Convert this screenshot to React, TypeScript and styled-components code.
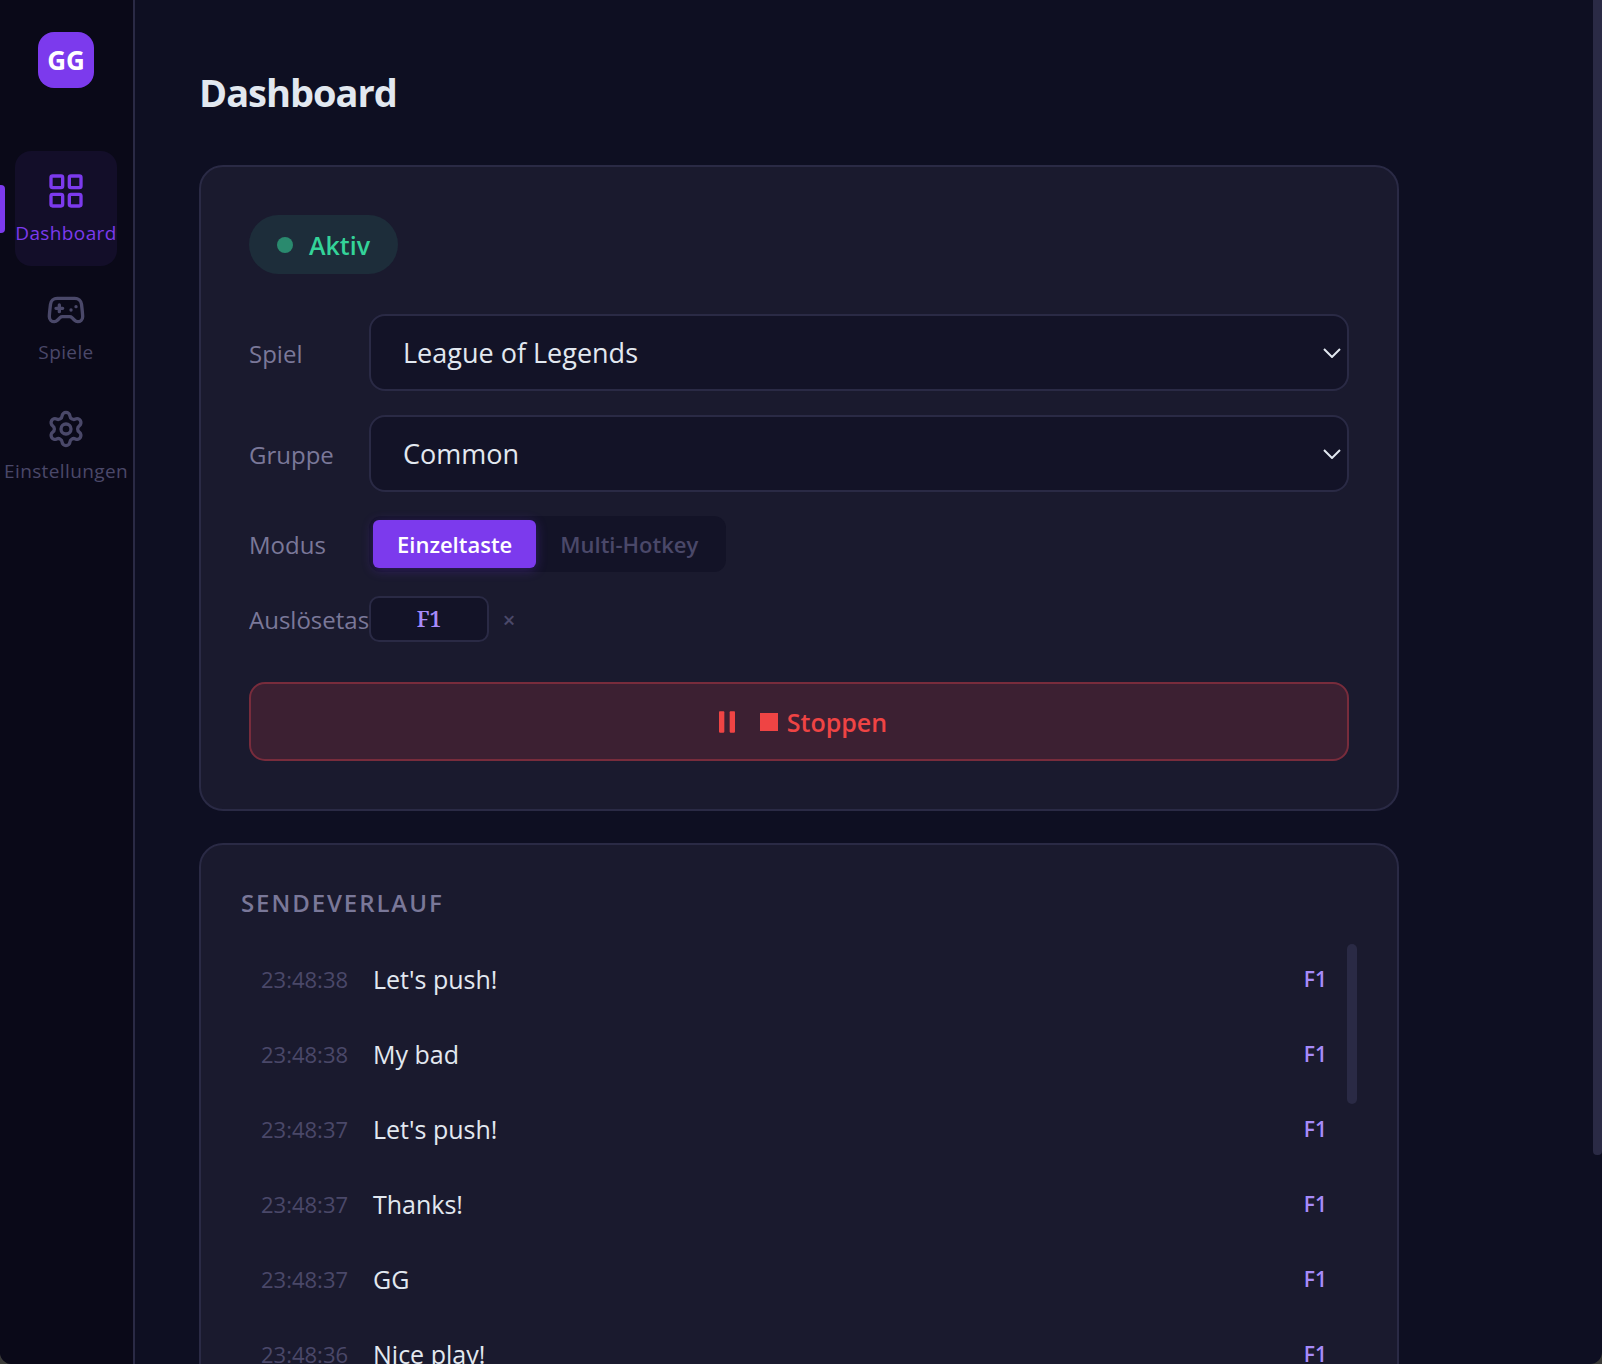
import React, { useState } from "react";
import styled, { createGlobalStyle, css } from "styled-components";

const color = {
  frame: "#3a3a38",
  bg: "#0e0f22",
  sidebar: "#0a0918",
  card: "#1a1a2e",
  field: "#131327",
  border: "#2a2a45",
  text: "#e2e8f0",
  label: "#7a7899",
  muted: "#4a4869",
  accent: "#7c3aed",
  accentSoft: "#a78bfa",
  ok: "#34d399",
  danger: "#ef4444",
};

const GlobalStyle = createGlobalStyle`
  * { box-sizing: border-box; }
  html, body { margin: 0; background: ${color.frame}; }
  body, button, input, select {
    font-family: "Segoe UI", "Open Sans", "Noto Sans", sans-serif;
  }
  h1, h2, ul { margin: 0; padding: 0; }
`;

const Shell = styled.div`
  display: flex;
  height: 100vh;
  overflow: hidden;
  background: ${color.bg};
  color: ${color.text};
  border-radius: 0 0 12px 12px;
`;

const Sidebar = styled.aside`
  flex: none;
  width: 135px;
  display: flex;
  flex-direction: column;
  align-items: center;
  padding: 32px 16px 0 15px;
  background: ${color.sidebar};
  border-right: 2px solid ${color.border};
`;

const Logo = styled.div`
  width: 56px;
  height: 56px;
  display: grid;
  place-items: center;
  margin-bottom: 63px;
  border-radius: 16px;
  background: ${color.accent};
  color: #fff;
  font-size: 26px;
  font-weight: 700;
`;

const Nav = styled.nav`
  width: 100%;
  display: flex;
  flex-direction: column;
  gap: 4px;
`;

const NavButton = styled.button<{ $active: boolean }>`
  height: 115px;
  display: flex;
  flex-direction: column;
  align-items: center;
  gap: 10px;
  padding: 20px 0 0;
  border: 0;
  border-radius: 16px;
  background: transparent;
  color: ${color.muted};
  font-size: 19px;
  line-height: 24px;
  font-weight: 500;
  letter-spacing: 0.02em;
  white-space: nowrap;
  cursor: pointer;
  ${(p) =>
    p.$active &&
    css`
      background: #130e29;
      color: ${color.accent};
      &::before {
        content: "";
        position: absolute;
        left: 0;
        width: 5px;
        height: 48px;
        margin-top: 14px;
        border-radius: 0 4px 4px 0;
        background: ${color.accent};
      }
    `}
`;

const NavIcon = styled.svg`
  flex: none;
  width: 40px;
  height: 40px;
  fill: none;
  stroke: currentColor;
  stroke-width: 2;
  stroke-linecap: round;
  stroke-linejoin: round;
`;

const Main = styled.main`
  flex: 1;
  min-width: 0;
  overflow-y: auto;
  scrollbar-width: none;
  padding: 64px;
`;

const Content = styled.div`
  max-width: 1200px;
  display: flex;
  flex-direction: column;
  gap: 32px;
`;

const Title = styled.h1`
  margin-bottom: 12px;
  font-size: 38px;
  line-height: 57px;
  font-weight: 700;
  letter-spacing: -1px;
`;

const Card = styled.section<{ $pad: number }>`
  padding: ${(p) => p.$pad}px;
  border: 2px solid ${color.border};
  border-radius: 24px;
  background: ${color.card};
`;

const Status = styled.div`
  width: fit-content;
  height: 59px;
  display: flex;
  align-items: center;
  gap: 16px;
  padding: 0 28px;
  margin-bottom: 40px;
  border-radius: 30px;
  background: #1d2d3a;
  color: ${color.ok};
  font-size: 25px;
  font-weight: 600;
`;

const Dot = styled.span`
  width: 16px;
  height: 16px;
  border-radius: 50%;
  background: #2a8a6e;
`;

const Form = styled.div`
  display: flex;
  flex-direction: column;
  gap: 24px;
`;

const Row = styled.div`
  display: flex;
  align-items: center;
`;

const Label = styled.label`
  flex: none;
  width: 120px;
  padding-top: 2px;
  overflow: hidden;
  white-space: nowrap;
  color: ${color.label};
  font-size: 24px;
  line-height: 34px;
`;

const SelectBox = styled.div`
  flex: 1;
  display: grid;
  align-items: center;
  > * {
    grid-area: 1 / 1;
  }
`;

const Select = styled.select`
  width: 100%;
  height: 77px;
  padding: 0 64px 0 32px;
  appearance: none;
  border: 2px solid ${color.border};
  border-radius: 16px;
  background: ${color.field};
  color: ${color.text};
  font-size: 27px;
`;

const Chevron = styled.svg`
  justify-self: end;
  width: 18px;
  height: 10px;
  margin-right: 8px;
  fill: none;
  stroke: ${color.text};
  stroke-width: 2;
  pointer-events: none;
`;

const Segments = styled.div`
  display: flex;
  padding: 4px;
  border-radius: 12px;
  background: ${color.field};
`;

const Segment = styled.button<{ $active: boolean }>`
  height: 48px;
  padding: 0 24px;
  border: 0;
  border-radius: 6px;
  background: ${(p) => (p.$active ? color.accent : "transparent")};
  box-shadow: ${(p) => (p.$active ? "0 2px 12px rgba(124, 58, 237, 0.3)" : "none")};
  color: ${(p) => (p.$active ? "#fff" : color.muted)};
  font-size: 22px;
  font-weight: 600;
  cursor: pointer;
`;

const KeyInput = styled.input`
  width: 120px;
  height: 46px;
  padding: 0;
  border: 2px solid ${color.border};
  border-radius: 10px;
  background: ${color.field};
  color: ${color.accentSoft};
  text-align: center;
  && {
    font-family: "Noto Serif", "Liberation Serif", serif;
  }
  font-size: 21px;
  font-weight: 600;
`;

const ClearButton = styled.button`
  width: 40px;
  height: 40px;
  padding: 0;
  border: 0;
  background: transparent;
  color: ${color.muted};
  font-size: 22px;
  line-height: 38px;
  font-weight: 600;
  cursor: pointer;
`;

const StopButton = styled.button`
  width: 100%;
  height: 79px;
  display: flex;
  align-items: center;
  justify-content: center;
  gap: 16px;
  margin-top: 40px;
  border: 2px solid #782c3c;
  border-radius: 16px;
  background: #3c2032;
  color: ${color.danger};
  font-size: 25px;
  font-weight: 600;
  cursor: pointer;
`;

const StopLabel = styled.span`
  display: flex;
  align-items: center;
  gap: 8px;
`;

const Glyph = styled.svg`
  flex: none;
  fill: currentColor;
`;

const HistoryTitle = styled.h2`
  margin-bottom: 24px;
  color: ${color.label};
  font-size: 24px;
  line-height: 35px;
  font-weight: 600;
  letter-spacing: 0.08em;
  text-transform: uppercase;
`;

const HistoryBox = styled.div`
  display: flex;
  height: 560px;
`;

const HistoryList = styled.ul`
  flex: 1;
  display: flex;
  flex-direction: column;
  gap: 6px;
  list-style: none;
`;

const Entry = styled.li`
  height: 69px;
  display: flex;
  align-items: center;
  gap: 24px;
  padding: 0 20px;
  font-size: 25px;
`;

const Time = styled.time`
  flex: none;
  width: 88px;
  color: ${color.muted};
  font-size: 22px;
`;

const Message = styled.span`
  flex: 1;
`;

const Key = styled.span`
  color: ${color.accentSoft};
  font-size: 21px;
  font-weight: 600;
`;

const ListThumb = styled.div`
  width: 10px;
  height: 160px;
  border-radius: 5px;
  background: ${color.border};
`;

const PageThumb = styled.div`
  flex: none;
  width: 9px;
  height: 85%;
  margin-top: -4px;
  border-radius: 4px;
  background: ${color.border};
`;

const GridIcon = () => (
  <NavIcon viewBox="0 0 24 24" aria-hidden="true">
    <rect x="3" y="3" width="7" height="7" rx="1" />
    <rect x="14" y="3" width="7" height="7" rx="1" />
    <rect x="14" y="14" width="7" height="7" rx="1" />
    <rect x="3" y="14" width="7" height="7" rx="1" />
  </NavIcon>
);

const GamepadIcon = () => (
  <NavIcon viewBox="0 0 24 24" aria-hidden="true">
    <path d="M6 11h4M8 9v4M15 12h.01M18 10h.01" />
    <path d="M17.32 5H6.68a4 4 0 0 0-3.978 3.59c-.006.052-.01.101-.017.152C2.604 9.416 2 14.456 2 16a3 3 0 0 0 3 3c1 0 1.5-.5 2-1l1.414-1.414A2 2 0 0 1 9.828 16h4.344a2 2 0 0 1 1.414.586L17 18c.5.5 1 1 2 1a3 3 0 0 0 3-3c0-1.545-.604-6.584-.685-7.258-.007-.05-.011-.1-.017-.151A4 4 0 0 0 17.32 5z" />
  </NavIcon>
);

const GearIcon = () => (
  <NavIcon viewBox="0 0 24 24" aria-hidden="true">
    <path d="M9.671 4.136a2.34 2.34 0 0 1 4.659 0 2.34 2.34 0 0 0 3.319 1.915 2.34 2.34 0 0 1 2.33 4.033 2.34 2.34 0 0 0 0 3.831 2.34 2.34 0 0 1-2.33 4.033 2.34 2.34 0 0 0-3.319 1.915 2.34 2.34 0 0 1-4.659 0 2.34 2.34 0 0 0-3.32-1.915 2.34 2.34 0 0 1-2.33-4.033 2.34 2.34 0 0 0 0-3.831A2.34 2.34 0 0 1 6.35 6.051a2.34 2.34 0 0 0 3.319-1.915" />
    <circle cx="12" cy="12" r="3" />
  </NavIcon>
);

const pages = [
  { name: "Dashboard", Icon: GridIcon },
  { name: "Spiele", Icon: GamepadIcon },
  { name: "Einstellungen", Icon: GearIcon },
];

const modes = ["Einzeltaste", "Multi-Hotkey"];

const history = [
  { time: "23:48:38", text: "Let's push!" },
  { time: "23:48:38", text: "My bad" },
  { time: "23:48:37", text: "Let's push!" },
  { time: "23:48:37", text: "Thanks!" },
  { time: "23:48:37", text: "GG" },
  { time: "23:48:36", text: "Nice play!" },
];

function SelectRow({ id, label, value }: { id: string; label: string; value: string }) {
  return (
    <Row>
      <Label htmlFor={id}>{label}</Label>
      <SelectBox>
        <Select id={id} defaultValue={value}>
          <option>{value}</option>
        </Select>
        <Chevron viewBox="0 0 18 10" aria-hidden="true">
          <path d="M1 1l8 8 8-8" />
        </Chevron>
      </SelectBox>
    </Row>
  );
}

export default function App() {
  const [page, setPage] = useState("Dashboard");
  const [mode, setMode] = useState(modes[0]);
  const [hotkey, setHotkey] = useState("F1");

  return (
    <>
      <GlobalStyle />
      <Shell>
        <Sidebar>
          <Logo>GG</Logo>
          <Nav>
            {pages.map(({ name, Icon }) => (
              <NavButton key={name} $active={name === page} onClick={() => setPage(name)}>
                <Icon />
                {name}
              </NavButton>
            ))}
          </Nav>
        </Sidebar>
        <Main>
          <Content>
            <Title>Dashboard</Title>
            <Card $pad={48}>
              <Status>
                <Dot />
                Aktiv
              </Status>
              <Form>
                <SelectRow id="game" label="Spiel" value="League of Legends" />
                <SelectRow id="group" label="Gruppe" value="Common" />
                <Row>
                  <Label as="span" id="mode-label">Modus</Label>
                  <Segments role="group" aria-labelledby="mode-label">
                    {modes.map((m) => (
                      <Segment key={m} $active={m === mode} onClick={() => setMode(m)}>
                        {m}
                      </Segment>
                    ))}
                  </Segments>
                </Row>
                <Row>
                  <Label htmlFor="hotkey">Auslösetaste</Label>
                  <KeyInput id="hotkey" value={hotkey} onChange={(e) => setHotkey(e.target.value)} />
                  <ClearButton aria-label="Taste löschen" onClick={() => setHotkey("")}>×</ClearButton>
                </Row>
              </Form>
              <StopButton>
                <Glyph width="32" height="32" viewBox="0 0 24 24" aria-hidden="true">
                  <rect x="6" y="4" width="4" height="16" rx="0.6" />
                  <rect x="14" y="4" width="4" height="16" rx="0.6" />
                </Glyph>
                <StopLabel>
                  <Glyph width="20" height="18" viewBox="0 0 20 18" aria-hidden="true">
                    <rect x="1" width="18" height="18" />
                  </Glyph>
                  Stoppen
                </StopLabel>
              </StopButton>
            </Card>
            <Card $pad={40}>
              <HistoryTitle>Sendeverlauf</HistoryTitle>
              <HistoryBox>
                <HistoryList>
                  {history.map((entry, i) => (
                    <Entry key={i}>
                      <Time>{entry.time}</Time>
                      <Message>{entry.text}</Message>
                      <Key>F1</Key>
                    </Entry>
                  ))}
                </HistoryList>
                <ListThumb />
              </HistoryBox>
            </Card>
          </Content>
        </Main>
        <PageThumb />
      </Shell>
    </>
  );
}
